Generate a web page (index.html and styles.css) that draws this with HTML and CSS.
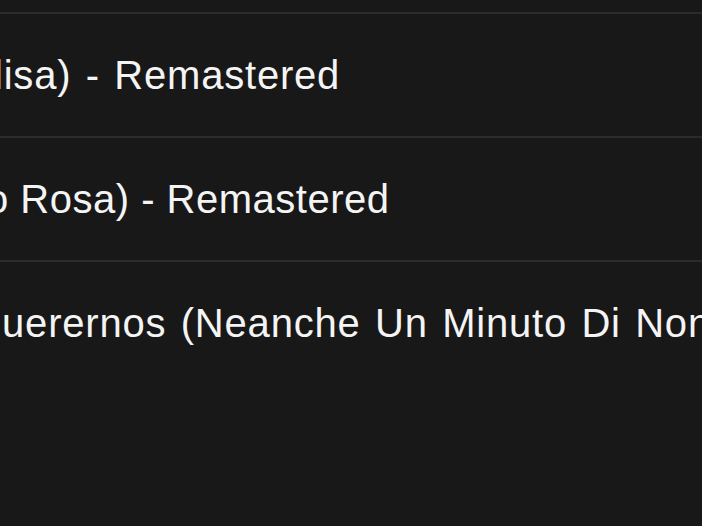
FILE: index.html
```html
<!DOCTYPE html>
<html lang="it">
<head>
    <meta charset="UTF-8">
    <meta name="viewport" content="width=device-width, initial-scale=1.0">
    <title>Tracce</title>
    <link rel="stylesheet" href="styles.css">
</head>
<body>
    <div class="tracklist">
        <div class="track">
            <span class="title title-first">lisa) - Remastered</span>
        </div>
        <div class="track">
            <span class="title title-second">o Rosa) - Remastered</span>
        </div>
        <div class="track">
            <span class="title title-third">querernos (Neanche Un Minuto Di Non Amore)</span>
        </div>
    </div>
</body>
</html>
```

FILE: styles.css
```css
body {
    margin: 0;
    background-color: #181818;
    font-family: "Liberation Sans", Arial, sans-serif;
    overflow: hidden;
}
.tracklist {
    padding-top: 12px;
}
.track {
    height: 122px;
    border-top: 2px solid #2b2b2b;
    display: flex;
    align-items: center;
    overflow: hidden;
    white-space: nowrap;
}
.title {
    color: #f4f4f4;
    font-size: 40px;
    letter-spacing: 0.8px;
    word-spacing: 2.5px;
}
/* i titoli sono tagliati a sinistra */
.title-first {
    margin-left: -6px;
}
.title-second {
    margin-left: -14px;
    letter-spacing: 0.5px;
    word-spacing: 0;
}
.title-third {
    margin-left: -21px;
}
```
